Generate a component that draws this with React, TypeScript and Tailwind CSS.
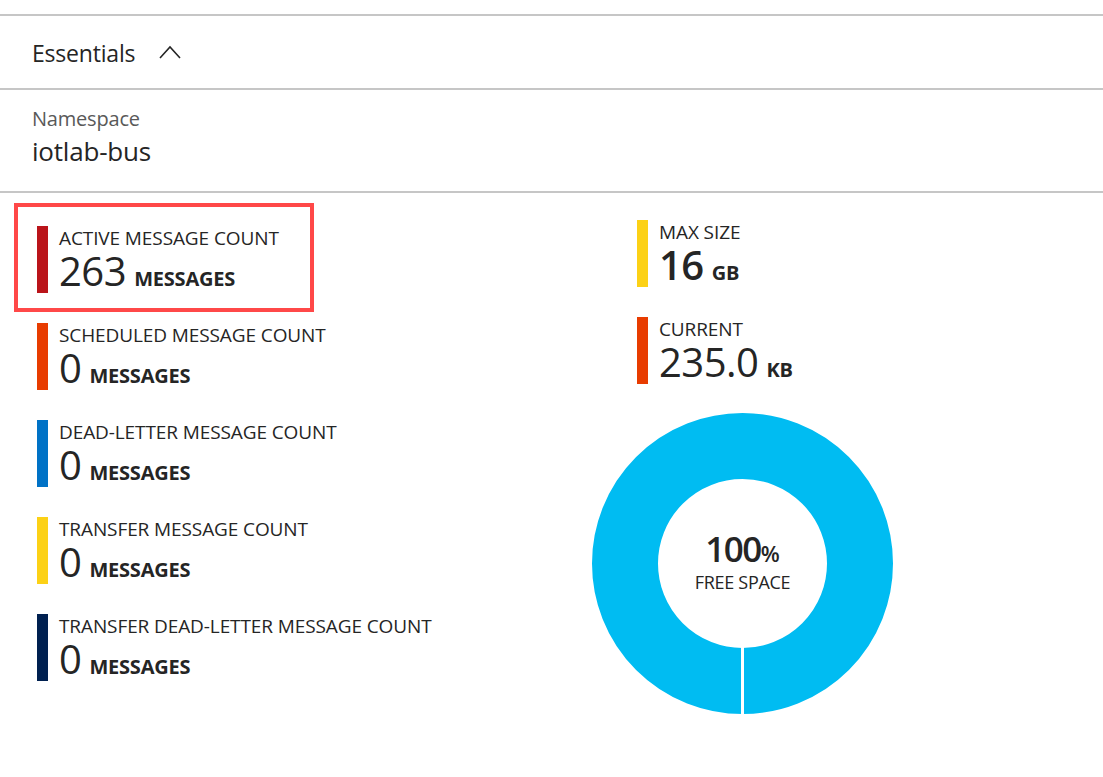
import React from 'react';

type Metric = {
  label: string;
  value: string;
  unit: string;
  color: string;
  boldValue?: boolean;
};

const counts: Metric[] = [
  { label: 'ACTIVE MESSAGE COUNT', value: '263', unit: 'MESSAGES', color: 'bg-[#ba141a]' },
  { label: 'SCHEDULED MESSAGE COUNT', value: '0', unit: 'MESSAGES', color: 'bg-[#e83c00]' },
  { label: 'DEAD-LETTER MESSAGE COUNT', value: '0', unit: 'MESSAGES', color: 'bg-[#0072c6]' },
  { label: 'TRANSFER MESSAGE COUNT', value: '0', unit: 'MESSAGES', color: 'bg-[#fcd116]' },
  { label: 'TRANSFER DEAD-LETTER MESSAGE COUNT', value: '0', unit: 'MESSAGES', color: 'bg-[#002050]' },
];

const sizes: Metric[] = [
  { label: 'MAX SIZE', value: '16', unit: 'GB', color: 'bg-[#fcd116]', boldValue: true },
  { label: 'CURRENT', value: '235.0', unit: 'KB', color: 'bg-[#e83c00]' },
];

function MetricTile({ m }: { m: Metric }) {
  return (
    <div className="flex h-[67px]">
      <div className={`w-[11px] shrink-0 ${m.color}`} />
      <div className="pl-[11px] text-[#252525]">
        <div className="text-[19px] leading-[24px] tracking-[-0.1px]">{m.label}</div>
        <div className="flex items-baseline leading-[42px]">
          <span className={`text-[40px] tracking-[-0.5px] ${m.boldValue ? 'font-semibold' : ''}`}>{m.value}</span>
          <span className="text-[20px] font-bold ml-[8px] tracking-[-0.2px]">{m.unit}</span>
        </div>
      </div>
    </div>
  );
}

function Donut() {
  return (
    <div className="relative w-[301px] h-[301px]">
      <svg width="301" height="301" viewBox="0 0 301 301">
        <circle cx="150.5" cy="150.5" r="117.5" fill="none" stroke="#00bcf2" strokeWidth="66" />
        <rect x="149" y="234" width="3" height="68" fill="#ffffff" />
      </svg>
      <div className="absolute inset-0 flex flex-col items-center justify-center text-[#252525]">
        <div className="flex items-baseline leading-[36px] mt-[-4px]">
          <span className="text-[35px] font-semibold tracking-[-1.5px]">100</span>
          <span className="text-[22px] font-semibold">%</span>
        </div>
        <div className="text-[18px] leading-[22px] tracking-[-0.3px]">FREE SPACE</div>
      </div>
    </div>
  );
}

export default function App() {
  return (
    <div className="w-[1103px] h-[777px] bg-white pt-[14px] font-['Open_Sans',sans-serif] overflow-hidden">
      {/* Essentials header */}
      <div className="border-t-2 border-[#c6c6c6] h-[74px] flex items-center pl-[32px]">
        <span className="text-[23px] mt-[2px] text-[#252525] tracking-[-0.2px]">Essentials</span>
        <svg className="ml-[24px]" width="22" height="14" viewBox="0 0 22 14">
          <polyline points="1,13 11,2 21,13" fill="none" stroke="#252525" strokeWidth="1.6" />
        </svg>
      </div>

      {/* Namespace */}
      <div className="border-t-2 border-[#c6c6c6] h-[103px] pl-[32px] pt-[16px]">
        <div className="text-[20px] leading-[26px] text-[#595959] tracking-[-0.2px]">Namespace</div>
        <div className="text-[26px] leading-[38px] text-[#252525] tracking-[-0.2px]">iotlab-bus</div>
      </div>

      {/* Metrics */}
      <div className="border-t-2 border-[#c6c6c6] flex">
        <div className="relative w-[600px] pl-[37px] pt-[33px] flex flex-col gap-[30px]">
          {/* highlight box */}
          <div className="absolute left-[14px] top-[10px] w-[300px] h-[109px] border-[4px] border-[#ff4848]" />
          {counts.map((m) => (
            <MetricTile key={m.label} m={m} />
          ))}
        </div>
        <div className="pl-[37px] pt-[27px] flex flex-col">
          <div className="flex flex-col gap-[30px]">
            {sizes.map((m) => (
              <MetricTile key={m.label} m={m} />
            ))}
          </div>
          <div className="mt-[29px] ml-[-45px]">
            <Donut />
          </div>
        </div>
      </div>
    </div>
  );
}
